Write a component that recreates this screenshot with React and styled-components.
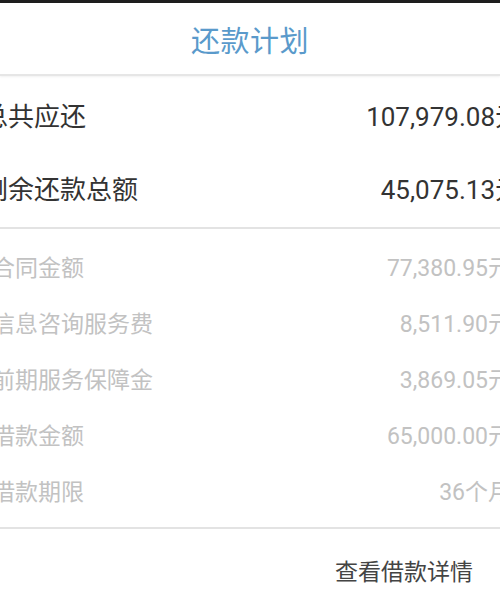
import React from 'react';
import styled, { createGlobalStyle } from 'styled-components';

const GlobalStyle = createGlobalStyle`
    html, body {
        margin: 0;
        padding: 0;
        background: #fff;
        overflow: hidden;
    }
    body {
        font-family: Roboto, "Noto Sans CJK SC", sans-serif;
    }
`;

const Screen = styled.div`
    width: 500px;
    height: 600px;
    overflow: hidden;
    background: #fff;
`;

const StatusEdge = styled.div`
    height: 3px;
    background: #1e1e1e;
`;

const Header = styled.header`
    height: 71px;
    display: flex;
    align-items: center;
    justify-content: center;
    border-bottom: 2px solid #e6e6e6;
    box-shadow: 0 1px 2px rgba(0, 0, 0, 0.06);
`;

const Title = styled.h1`
    margin: 0;
    font-size: 29px;
    font-weight: 400;
    color: #5a9acb;
    letter-spacing: 0.5px;
`;

// the shot is cropped, so the content runs a little past both edges
const Body = styled.div`
    width: 539px;
    margin-left: -18px;
`;

const Section = styled.section`
    padding: ${props => props.pad};
    border-bottom: ${props => (props.divided ? '2px solid #e3e3e3' : 'none')};
    margin: ${props => (props.divided ? '0 -30px' : '0')};
`;

const Rows = styled.div`
    margin: ${props => (props.inset ? '0 40px' : '0 30px')};
`;

const Row = styled.div`
    display: flex;
    align-items: center;
    justify-content: space-between;
    height: ${props => (props.muted ? '56px' : '73px')};
    font-size: ${props => (props.muted ? '23px' : '26px')};
    color: ${props => (props.muted ? '#c2c2c2' : '#333')};
`;

const Label = styled.span`
    white-space: nowrap;
`;

const Value = styled.span`
    white-space: nowrap;
`;

const Footer = styled.div`
    display: flex;
    justify-content: flex-end;
    padding: 24px 48px 0 0;
`;

const DetailLink = styled.a`
    font-size: 23px;
    color: #444;
    cursor: pointer;
`;

const summary = [
    ['总共应还', '107,979.08元'],
    ['剩余还款总额', '45,075.13元'],
];

const details = [
    ['合同金额', '77,380.95元'],
    ['信息咨询服务费', '8,511.90元'],
    ['前期服务保障金', '3,869.05元'],
    ['借款金额', '65,000.00元'],
    ['借款期限', '36个月'],
];

export default function App() {
    return (
        <Screen>
            <GlobalStyle />
            <StatusEdge />
            <Header>
                <Title>还款计划</Title>
            </Header>
            <Body>
                <Section pad="2px 0 3px" divided>
                    <Rows>
                        {summary.map(([label, value]) => (
                            <Row key={label}>
                                <Label>{label}</Label>
                                <Value>{value}</Value>
                            </Row>
                        ))}
                    </Rows>
                </Section>
                <Section pad="9px 0 9px" divided>
                    <Rows inset>
                        {details.map(([label, value]) => (
                            <Row key={label} muted>
                                <Label>{label}</Label>
                                <Value>{value}</Value>
                            </Row>
                        ))}
                    </Rows>
                </Section>
                <Footer>
                    <DetailLink>查看借款详情</DetailLink>
                </Footer>
            </Body>
        </Screen>
    );
}
